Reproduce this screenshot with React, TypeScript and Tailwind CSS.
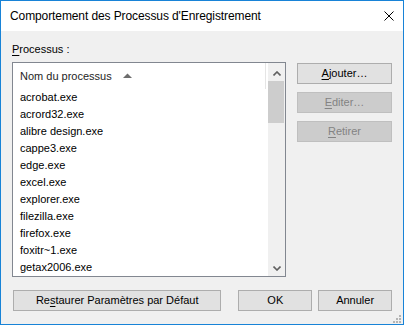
import React from "react";

const items = [
  "acrobat.exe",
  "acrord32.exe",
  "alibre design.exe",
  "cappe3.exe",
  "edge.exe",
  "excel.exe",
  "explorer.exe",
  "filezilla.exe",
  "firefox.exe",
  "foxitr~1.exe",
  "getax2006.exe",
];

const F = { fontFamily: '"Liberation Sans", Arial, sans-serif' };

function Btn({
  children,
  disabled,
  className,
}: {
  children: React.ReactNode;
  disabled?: boolean;
  className?: string;
}) {
  return (
    <div
      className={
        (disabled
          ? "bg-[#cccccc] border-[#bfbfbf] text-[#838383] "
          : "bg-[#e1e1e1] border-[#adadad] text-black ") +
        "border h-[21px] flex items-center justify-center text-[11px] leading-[17px] " +
        (className ?? "")
      }
    >
      {children}
    </div>
  );
}

export default function App() {
  return (
    <div
      className="relative w-[404px] h-[325px] border border-[#1883d7] bg-[#f0f0f0] flex flex-col overflow-hidden"
      style={F}
    >
      {/* Title bar */}
      <div className="h-[30px] bg-white flex items-center justify-between pl-[9px] pr-[9px] shrink-0">
        <span className="text-[12px] leading-[16px] tracking-[-0.1px] text-black">
          Comportement des Processus d'Enregistrement
        </span>
        <svg width="10" height="10" viewBox="0 0 10 10" className="mb-[1px]">
          <path d="M0.5 0.5 L9.5 9.5 M9.5 0.5 L0.5 9.5" stroke="#000" strokeWidth="1" />
        </svg>
      </div>

      {/* Body */}
      <div className="flex flex-col px-[11px] pt-[10px]">
        <div className="flex">
          <div className="w-[275px] flex flex-col">
            <div className="h-[16px] leading-[16px] text-[11px] text-black">
              <u className="underline-offset-[2px]">P</u>rocessus :
            </div>
            <div className="mt-[5px] h-[215px] border border-[#828790] bg-white flex">
              {/* list content */}
              <div className="flex-1 flex flex-col">
                <div className="h-[26px] flex shrink-0">
                  <div className="w-[253px] border-r border-[#e5e5e5] flex items-center pl-[7px] text-[11px] leading-[17px] text-[#1e1e1e]">
                    <span>Nom du processus</span>
                    <svg width="9" height="5" viewBox="0 0 9 5" className="ml-[11px] mb-[2px]">
                      <path d="M0 5 L4.5 0.5 L9 5 Z" fill="#6d6d6d" />
                    </svg>
                  </div>
                </div>
                {items.map((it) => (
                  <div
                    key={it}
                    className="h-[17px] leading-[17px] pl-[7px] text-[11px] text-black whitespace-nowrap"
                  >
                    {it}
                  </div>
                ))}
              </div>
              {/* scrollbar */}
              <div className="w-[17px] bg-[#f0f0f0] flex flex-col shrink-0">
                <div className="h-[18px] flex items-center justify-center">
                  <svg width="8" height="5" viewBox="0 0 8 5" className="mt-[2px]">
                    <path d="M0.5 4.5 L4 1 L7.5 4.5" stroke="#606060" strokeWidth="1.6" fill="none" />
                  </svg>
                </div>
                <div className="h-[42px] bg-[#cdcdcd] mr-[1px]" />
                <div className="flex-1" />
                <div className="h-[17px] flex items-center justify-center">
                  <svg width="8" height="5" viewBox="0 0 8 5" className="mt-[1px]">
                    <path d="M0.5 0.5 L4 4 L7.5 0.5" stroke="#606060" strokeWidth="1.6" fill="none" />
                  </svg>
                </div>
              </div>
            </div>
          </div>
          <div className="ml-[11px] pt-[22px] flex flex-col gap-[8px]">
            <Btn className="w-[95px]">
              <span>
                <u className="underline-offset-[2px]">A</u>jouter…
              </span>
            </Btn>
            <Btn className="w-[95px]" disabled>
              <span>
                <u className="underline-offset-[2px]">E</u>diter…
              </span>
            </Btn>
            <Btn className="w-[95px]" disabled>
              <span>
                <u className="underline-offset-[2px]">R</u>etirer
              </span>
            </Btn>
          </div>
        </div>

        <div className="flex mt-[13px] ml-[1px]">
          <Btn className="w-[209px]">
            <span>
              Re<u className="underline-offset-[2px]">s</u>taurer Paramètres par Défaut
            </span>
          </Btn>
          <Btn className="w-[74px] ml-[17px]">OK</Btn>
          <Btn className="w-[74px] ml-[6px]">Annuler</Btn>
        </div>
      </div>

      {/* resize grip */}
      <svg
        width="9"
        height="9"
        viewBox="0 0 9 9"
        className="absolute right-[2px] bottom-[1px]"
      >
        <rect x="7" y="1" width="2" height="2" fill="#b4b4b4" />
        <rect x="4" y="4" width="2" height="2" fill="#b4b4b4" />
        <rect x="7" y="4" width="2" height="2" fill="#b4b4b4" />
        <rect x="1" y="7" width="2" height="2" fill="#b4b4b4" />
        <rect x="4" y="7" width="2" height="2" fill="#b4b4b4" />
        <rect x="7" y="7" width="2" height="2" fill="#b4b4b4" />
      </svg>
    </div>
  );
}
